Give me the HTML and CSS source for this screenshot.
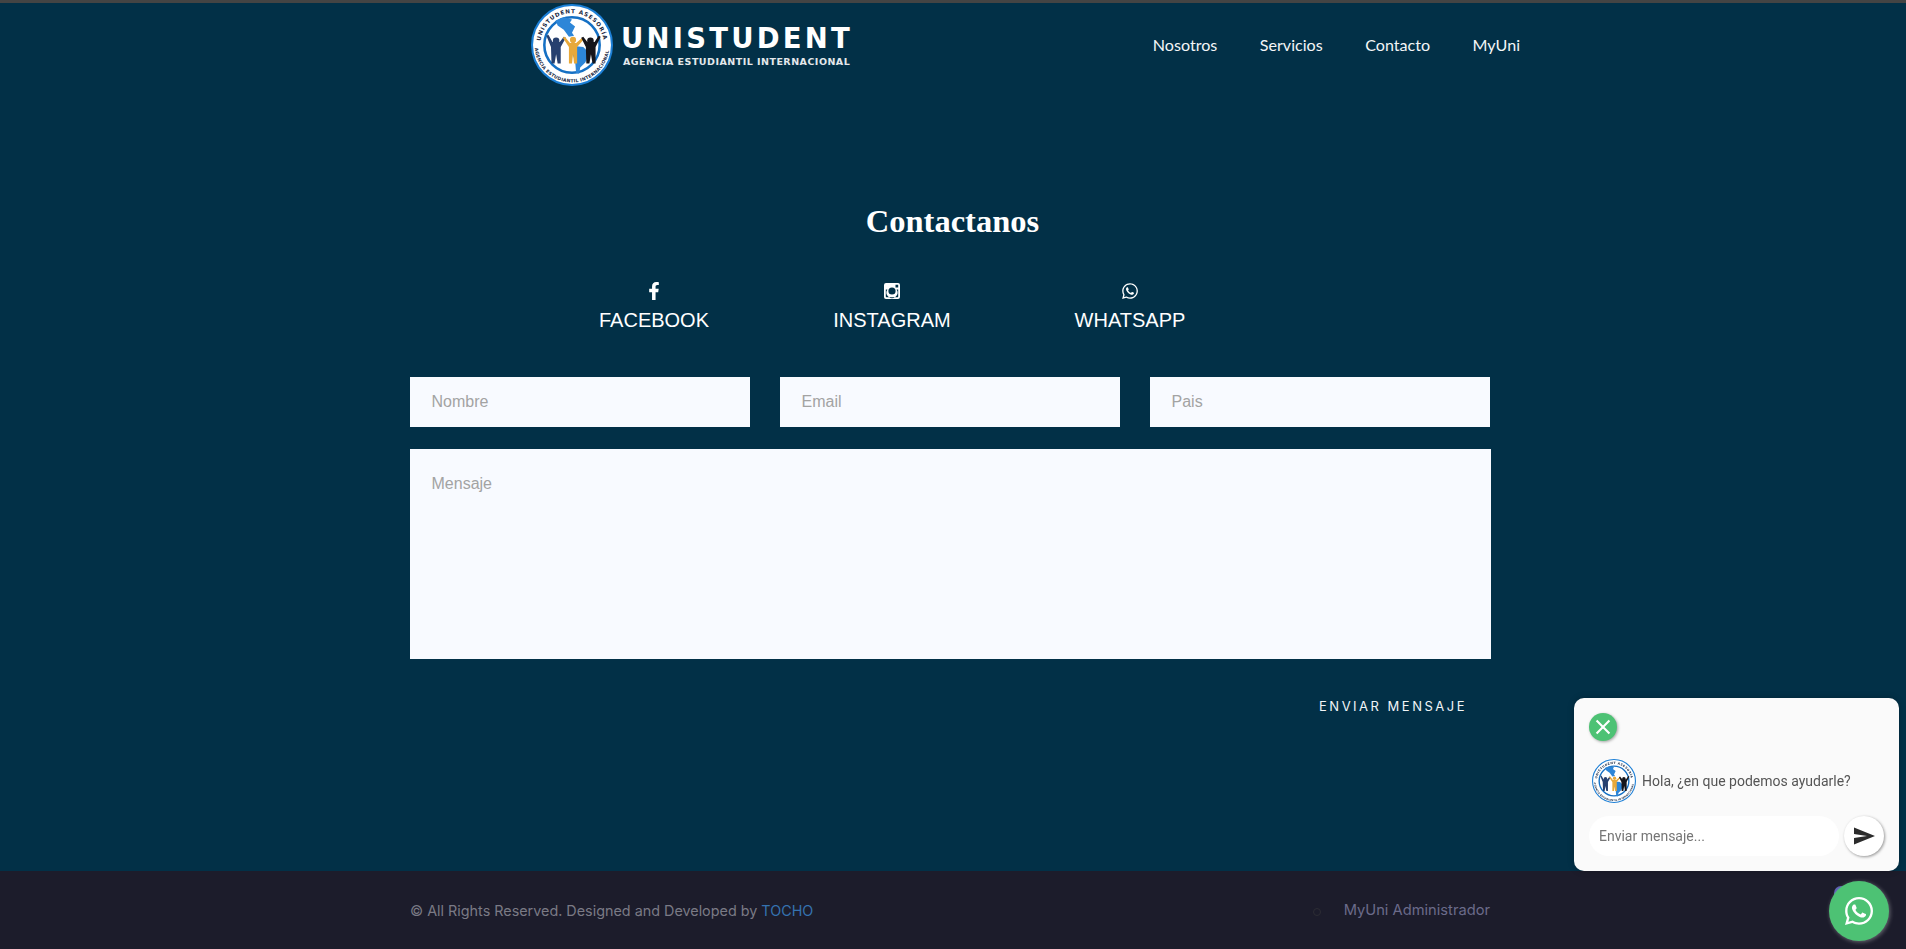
FILE: index.html
```html
<!DOCTYPE html>
<html lang="es">
<head>
    <meta charset="UTF-8">
    <meta name="viewport" content="width=device-width, initial-scale=1.0">
    <title>Unistudent - Contacto</title>
    <link rel="stylesheet" href="styles.css">
</head>
<body>
    <div class="page">
        <header class="site-header">
            <a class="brand" href="#">
                <svg class="brand-mark" viewBox="0 0 80 80">
                    <g id="uni-logo">
                        <circle cx="40" cy="40" r="39" fill="#fff" stroke="#1c7fd6" stroke-width="2"/>
                        <path id="arc-top" d="M9 40a31 31 0 0 1 62 0" fill="none"/>
                        <path id="arc-bottom" d="M3.500 40a36.500 36.500 0 0 0 73 0" fill="none"/>
                        <text class="logo-ring" textLength="88"><textPath href="#arc-top" startOffset="4">UNISTUDENT ASESORÍA</textPath></text>
                        <text class="logo-ring logo-ring-sm" textLength="106"><textPath href="#arc-bottom" startOffset="3">AGENCIA ESTUDIANTIL INTERNACIONAL</textPath></text>
                        <circle cx="40" cy="40" r="27" fill="#fff" stroke="#1570c4" stroke-width="2.500"/>
                        <path d="M24 16l8-3 8 2-2 3 5 4-3 6 2 3-5 1-5-7-6-4z" fill="#2d86d8"/>
                        <path d="M42 41l9 1 6 6-4 9-5 5-1 6-3-1-1-12-3-7z" fill="#2d86d8"/>
                        <g fill="#27406f">
                            <circle cx="24.500" cy="36" r="3.200"/>
                            <path d="M15 31l2-1 4 7h7l4-5 2 1-5 9 0 16h-3l-1.500-9-1.500 9h-3l-.5-16z"/>
                        </g>
                        <g fill="#e8a93a">
                            <circle cx="41" cy="35" r="3"/>
                            <path d="M31 33l2-1 5 6h6l6-5 2 1-7 8 0 16h-3l-1-9-1 9h-3l0-16z"/>
                        </g>
                        <g fill="#15151b">
                            <circle cx="58" cy="36" r="3.200"/>
                            <path d="M49 33l2-1 4 5h7l4-6 2 1-5 10 0 16h-3l-1.500-9-1.500 9h-3l-.5-16z"/>
                        </g>
                    </g>
                </svg>
                <span class="brand-text">
                    <span class="brand-name">UNISTUDENT</span>
                    <span class="brand-sub">AGENCIA ESTUDIANTIL INTERNACIONAL</span>
                </span>
            </a>
            <nav class="main-nav">
                <a href="#">Nosotros</a>
                <a href="#">Servicios</a>
                <a href="#">Contacto</a>
                <a href="#">MyUni</a>
            </nav>
        </header>

        <main class="contact">
            <h2 class="contact-title">Contactanos</h2>

            <div class="social-row">
                <a class="social-item" href="#">
                    <svg class="social-icon" viewBox="0 0 320 512"><path d="M279.140 288l14.220-92.660h-88.910v-60.130c0-25.350 12.420-50.060 52.240-50.060h40.420V6.260S260.430 0 225.360 0c-73.220 0-121.080 44.380-121.080 124.720v70.620H22.890V288h81.390v224h100.170V288z"/></svg>
                    FACEBOOK
                </a>
                <a class="social-item" href="#">
                    <svg class="social-icon" viewBox="0 0 18 18"><path fill-rule="evenodd" d="M3 1h12a2 2 0 0 1 2 2v12a2 2 0 0 1-2 2H3a2 2 0 0 1-2-2V3a2 2 0 0 1 2-2zm9.500 1.800v2.700h2.700V2.800zM9 5.400a3.600 3.600 0 1 0 0 7.200 3.600 3.600 0 0 0 0-7.200zM2.800 7.600v6.900c0 .4.300.7.700.7h11c.4 0 .7-.3.700-.7V7.600h-1.600a5.500 5.500 0 1 1-9.200 0z"/></svg>
                    INSTAGRAM
                </a>
                <a class="social-item" href="#">
                    <svg class="social-icon" viewBox="0 0 448 512"><use href="#wa-path"/></svg>
                    WHATSAPP
                </a>
            </div>

            <form class="contact-form">
                <div class="form-row">
                    <input type="text" placeholder="Nombre">
                    <input type="email" placeholder="Email">
                    <input type="text" placeholder="Pais">
                </div>
                <textarea placeholder="Mensaje"></textarea>
                <button class="send-btn" type="button">ENVIAR MENSAJE</button>
            </form>
        </main>

        <footer class="site-footer">
            <p class="copy">© All Rights Reserved. Designed and Developed by <a href="#">TOCHO</a></p>
            <ul class="footer-links">
                <li><a href="#">MyUni Administrador</a></li>
            </ul>
        </footer>
    </div>

    <!-- chat de whatsapp -->
    <div class="chat-box">
        <button class="chat-close" type="button">
            <svg viewBox="0 0 24 24" width="28" height="28"><path d="M6.500 6.500l11 11M17.500 6.500l-11 11" stroke="#fff" stroke-width="1.800" fill="none"/></svg>
        </button>
        <div class="chat-msg">
            <svg class="chat-avatar" viewBox="0 0 80 80"><use href="#uni-logo"/></svg>
            <span>Hola, ¿en que podemos ayudarle?</span>
        </div>
        <div class="chat-input-row">
            <input type="text" placeholder="Enviar mensaje...">
            <button class="chat-send" type="button">
                <svg viewBox="0 0 24 24" width="24" height="24"><path d="M2 20.500L23 12 2 3.500V10l13 2-13 2z" fill="#2b2b2b"/></svg>
            </button>
        </div>
    </div>
    <span class="wa-dot"></span>
    <button class="wa-float" type="button">
        <svg viewBox="0 0 448 512" width="28" height="32"><path id="wa-path" fill="#fff" d="M380.900 97.100C339 55.100 283.200 32 223.900 32c-122.400 0-222 99.600-222 222 0 39.100 10.200 77.300 29.600 111L0 480l117.700-30.900c32.400 17.700 68.900 27 106.100 27h.1c122.300 0 224.100-99.600 224.100-222 0-59.300-25.200-115-67.100-157zm-157 341.600c-33.200 0-65.700-8.900-94-25.700l-6.700-4-69.800 18.300L72 359.200l-4.400-7c-18.500-29.400-28.200-63.300-28.200-98.200 0-101.700 82.800-184.500 184.600-184.500 49.300 0 95.600 19.200 130.400 54.100 34.800 34.900 56.200 81.200 56.100 130.500 0 101.800-84.900 184.600-186.600 184.600zm101.200-138.200c-5.500-2.800-32.800-16.200-37.900-18-5.100-1.900-8.800-2.800-12.500 2.800-3.700 5.600-14.300 18-17.600 21.800-3.200 3.700-6.500 4.200-12 1.400-32.600-16.300-54-29.100-75.500-66-5.700-9.800 5.700-9.100 16.300-30.300 1.800-3.700.9-6.900-.5-9.700-1.400-2.800-12.500-30.100-17.100-41.200-4.500-10.800-9.100-9.300-12.500-9.500-3.200-.2-6.900-.2-10.600-.2-3.700 0-9.700 1.400-14.800 6.900-5.100 5.600-19.400 19-19.400 46.300 0 27.300 19.900 53.700 22.600 57.400 2.800 3.700 39.100 59.700 94.800 83.800 35.200 15.200 49 16.500 66.600 13.900 10.700-1.600 32.800-13.400 37.400-26.400 4.600-13 4.600-24.100 3.200-26.400-1.300-2.500-5-3.900-10.500-6.600z"/></svg>
    </button>
</body>
</html>
```

FILE: styles.css
```css
* {
    box-sizing: border-box;
}
html, body {
    margin: 0;
    height: 949px;
    overflow: hidden;
}
body {
    background: #023047;
    color: #fff;
    font-family: 'Liberation Sans', Arial, sans-serif;
}
a {
    color: inherit;
    text-decoration: none;
}
.page {
    display: flex;
    flex-direction: column;
    height: 949px;
    border-top: 3px solid #444;
}

/* header */
.site-header {
    display: flex;
    justify-content: space-between;
    align-items: center;
    height: 84px;
    padding: 0 386px 0 531px;
}
.brand {
    display: flex;
    align-items: center;
    gap: 8px;
}
.brand-mark {
    width: 82px;
    height: 82px;
}
.brand-text {
    display: flex;
    flex-direction: column;
}
.brand-name {
    font-family: 'DejaVu Sans', sans-serif;
    font-weight: bold;
    font-size: 27.500px;
    line-height: 30px;
    letter-spacing: 3.200px;
    white-space: nowrap;
}
.brand-sub {
    font-family: 'DejaVu Sans', sans-serif;
    font-weight: bold;
    font-size: 9.500px;
    line-height: 11px;
    letter-spacing: .48px;
    margin: 3px 0 0 2px;
    color: #e4e8ec;
    white-space: nowrap;
}
.logo-ring {
    font-family: 'DejaVu Sans', sans-serif;
    font-weight: bold;
    font-size: 5.500px;
    fill: #1b2a44;
}
.logo-ring-sm {
    font-size: 4.400px;
}
.main-nav {
    display: flex;
    gap: 42.500px;
    margin-top: -2px;
    font-family: Lato, sans-serif;
    font-size: 16.100px;
    color: #f4f6f7;
}

/* contacto */
.contact {
    flex: 1;
    padding: 114px 415px 0 410px;
}
.contact-title {
    margin: 0;
    text-align: center;
    font-family: 'Liberation Serif', serif;
    font-weight: bold;
    font-size: 32.500px;
    line-height: 40px;
    padding-left: 4px;
}
.social-row {
    display: grid;
    grid-template-columns: repeat(3, 238px);
    justify-content: start;
    margin: 41px 0 0 125px;
}
.social-item {
    display: flex;
    flex-direction: column;
    align-items: center;
    gap: 8.500px;
    font-size: 20px;
    line-height: 23px;
}
.social-icon {
    width: 18px;
    height: 18px;
    fill: #fff;
}
.contact-form {
    margin-top: 45px;
}
.form-row {
    display: flex;
    gap: 30px;
}
.form-row input {
    width: 340px;
    height: 50px;
}
input, textarea {
    border: 0;
    outline: 0;
    background: #f8faff;
    font-family: 'Liberation Sans', Arial, sans-serif;
    font-size: 16px;
    padding: 0 21.500px;
}
input::placeholder, textarea::placeholder {
    color: #a3a3a3;
}
textarea {
    display: block;
    width: 1081px;
    height: 210px;
    margin-top: 22px;
    padding: 26px 21.500px;
    resize: none;
}
.send-btn {
    display: block;
    margin: 38px 24px 0 auto;
    padding: 0;
    border: 0;
    background: none;
    color: #f1f5f7;
    font-family: Inter, sans-serif;
    font-size: 13px;
    line-height: 18px;
    letter-spacing: 2.500px;
}

/* footer */
.site-footer {
    display: flex;
    justify-content: space-between;
    align-items: center;
    height: 78px;
    padding: 0 416px 0 410px;
    background: #1c1c2b;
    font-family: Inter, sans-serif;
    font-size: 14.370px;
}
.copy {
    margin: 0;
    color: #7a7a85;
}
.copy a {
    color: #3572b0;
}
.footer-links {
    margin: 0;
    padding: 0;
    list-style-type: none;
    font-size: 14.700px;
}
.footer-links li {
    position: relative;
    color: #6b6b8a;
}
.footer-links li::before {
    content: "";
    position: absolute;
    left: -31px;
    top: 7px;
    width: 6px;
    height: 6px;
    border: 1.500px solid #2c2c34;
    border-radius: 50%;
}

/* chat flotante */
.chat-box {
    position: fixed;
    left: 1574px;
    top: 698px;
    width: 325px;
    height: 173px;
    padding: 15px;
    background: #fafafa;
    border-radius: 10px;
    box-shadow: 0 0 6px rgba(0, 0, 0, .25);
    font-family: Roboto, sans-serif;
}
.chat-close {
    display: block;
    width: 28px;
    height: 28px;
    padding: 0;
    border: 0;
    border-radius: 50%;
    background: #4dc274;
    box-shadow: 1px 1px 3px rgba(0, 0, 0, .35);
}
.chat-close svg {
    display: block;
}
.chat-msg {
    display: flex;
    align-items: center;
    gap: 6px;
    margin: 18px 0 0 3px;
    font-size: 14px;
    color: #555;
}
.chat-avatar {
    width: 44px;
    height: 44px;
}
.chat-input-row {
    display: flex;
    gap: 5px;
    margin-top: 13px;
}
.chat-input-row input {
    width: 250px;
    height: 40px;
    padding: 0 10px;
    border-radius: 20px;
    background: #fff;
    font-family: Roboto, sans-serif;
    font-size: 14px;
}
.chat-input-row input::placeholder {
    color: #757575;
}
.chat-send {
    display: flex;
    align-items: center;
    justify-content: center;
    width: 40px;
    height: 40px;
    padding: 0;
    border: 0;
    border-radius: 50%;
    background: #fff;
    box-shadow: 1px 1px 3px rgba(0, 0, 0, .4);
}
.wa-dot {
    position: fixed;
    left: 1834px;
    top: 886px;
    width: 14px;
    height: 14px;
    border-radius: 50%;
    background: #5a5fb0;
}
.wa-float {
    position: fixed;
    left: 1829px;
    top: 881px;
    display: flex;
    align-items: center;
    justify-content: center;
    width: 60px;
    height: 60px;
    padding: 0;
    border: 0;
    border-radius: 50%;
    background: #4dc274;
    box-shadow: 1px 1px 4px rgba(255, 255, 255, .35);
}
```
